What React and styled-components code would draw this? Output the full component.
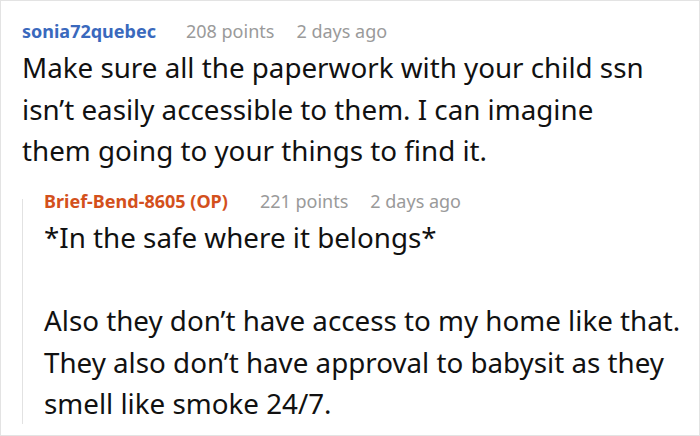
import React from "react";
import styled, { createGlobalStyle } from "styled-components";

const GlobalStyle = createGlobalStyle`
  html, body {
    margin: 0;
    padding: 0;
    background: #ffffff;
  }
  * {
    box-sizing: border-box;
  }
`;

const comments = {
  parent: {
    author: "sonia72quebec",
    points: "208 points",
    time: "2 days ago",
    lines: [
      "Make sure all the paperwork with your child ssn isn’t easily accessible to them. I can imagine them going to your things to find it.",
    ],
  },
  reply: {
    author: "Brief-Bend-8605 (OP)",
    points: "221 points",
    time: "2 days ago",
    lines: [
      "*In the safe where it belongs*",
      "Also they don’t have access to my home like that. They also don’t have approval to babysit as they smell like smoke 24/7.",
    ],
  },
};

export default function App() {
  const { parent, reply } = comments;
  return (
    <>
      <GlobalStyle />
      <Page>
        <Comment>
          <Header>
            <Author $op={false}>{parent.author}</Author>
            <Meta $gap={30}>{parent.points}</Meta>
            <Meta $gap={22}>{parent.time}</Meta>
          </Header>
          {parent.lines.map((l, i) => (
            <Body key={i}>{l}</Body>
          ))}
        </Comment>
        <Reply>
          <Header>
            <Author $op>{reply.author}</Author>
            <Meta $gap={32}>{reply.points}</Meta>
            <Meta $gap={22}>{reply.time}</Meta>
          </Header>
          {reply.lines.map((l, i) => (
            <Body key={i}>{l}</Body>
          ))}
        </Reply>
      </Page>
    </>
  );
}

const Page = styled.div`
  width: 700px;
  height: 436px;
  border: 1px solid #e3e3e3;
  padding: 18px 12px 0 21px;
  font-family: "Noto Sans", "Open Sans", sans-serif;
  overflow: hidden;
`;

const Comment = styled.div`
  display: flex;
  flex-direction: column;
  padding-right: 30px;
`;

const Header = styled.div`
  display: flex;
  align-items: baseline;
  font-size: 18px;
  line-height: 24px;
  margin-bottom: 4px;
`;

const Author = styled.span`
  font-weight: 700;
  color: ${(p) => (p.$op ? "#d3501c" : "#3a69bd")};
`;

const Meta = styled.span`
  margin-left: ${(p) => p.$gap}px;
  color: #9a9a9a;
`;

const Body = styled.p`
  margin: 0;
  font-size: 27.75px;
  line-height: 41.6px;
  color: #111111;

  & + & {
    margin-top: 41.6px;
  }
`;

const Reply = styled.div`
  position: relative;
  margin-top: 17px;
  padding-left: 22px;

  &::before {
    content: "";
    position: absolute;
    left: 0;
    top: 10px;
    bottom: 1px;
    width: 1px;
    background: #e2e2e2;
  }
`;
